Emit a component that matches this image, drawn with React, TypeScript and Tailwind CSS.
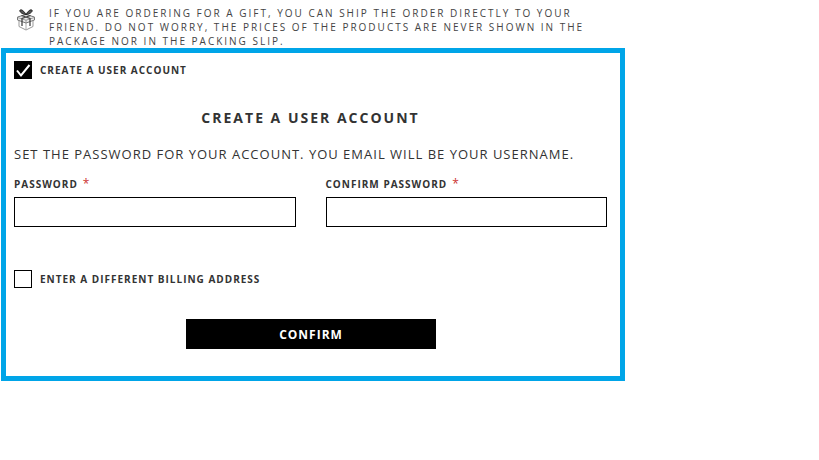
// Checkout step: gift note and create-account box
function GiftIcon() {
  return (
    <svg viewBox="0 0 20 23" className="w-[20px] h-[23px]" fill="none">
      {/* caja */}
      <path d="M3 12V18.5L10 22 17 18.5V12" stroke="#999" strokeWidth="1" fill="#fff" />
      <path d="M10 15V22" stroke="#aaa" strokeWidth="1" />
      {/* tapa */}
      <path d="M1.5 9 10 6.5 18.5 9V12L10 15 1.5 12Z" stroke="#777" strokeWidth="1" fill="#eee" />
      <path d="M1.5 9.5 10 12.2 18.5 9.5M10 12.2V15" stroke="#888" strokeWidth="0.8" />
      {/* cinta */}
      <path d="M5.5 7.5 14 10.5V18M14.5 7.5 6 10.5V18" stroke="#444" strokeWidth="1.3" />
      {/* lazo */}
      <path d="M10 6.5C8 3 5.5 1.2 4.2 2 2.8 3 5.5 6.3 10 6.5ZM10 6.5C12 3 14.5 1.2 15.8 2 17.2 3 14.5 6.3 10 6.5Z" fill="#555" stroke="#222" strokeWidth="1" />
    </svg>
  );
}

function CheckRow({ label, checked }: { label: string; checked?: boolean }) {
  return (
    <label className="flex items-center gap-2 h-[18px]">
      <span className={`w-[18px] h-[18px] border border-black flex items-center justify-center ${checked ? "bg-black" : "bg-white"}`}>
        {checked && (
          <svg viewBox="0 0 18 18" className="w-[18px] h-[18px] shrink-0" fill="none">
            <path d="M3 9.5 7 14.5 15.5 4" stroke="#fff" strokeWidth="2" />
          </svg>
        )}
      </span>
      <span className="text-[10px] leading-[18px] font-bold tracking-[1px] text-[#333]">{label}</span>
    </label>
  );
}

function Field({ label }: { label: string }) {
  return (
    <div className="flex-1">
      <div className="h-[26px] flex items-center text-[10px] font-bold tracking-[1px] text-[#333]">
        {label} <span className="ml-[5px] text-[#c33] text-[12px] font-normal">*</span>
      </div>
      <input className="block w-full h-[30px] border border-black bg-white" />
    </div>
  );
}

export default function App() {
  return (
    <div className="w-[819px] h-[460px] bg-white overflow-hidden font-['Open_Sans',sans-serif]">
      {/* Aviso regalo */}
      <div className="flex h-[48px] pl-[16px] pt-[6px]">
        <div className="pt-[2px]">
          <GiftIcon />
        </div>
        <p className="ml-[13px] w-[545px] text-[10px] leading-[14px] tracking-[2px] text-[#444]">
          IF YOU ARE ORDERING FOR A GIFT, YOU CAN SHIP THE ORDER DIRECTLY TO YOUR FRIEND. DO NOT WORRY, THE PRICES OF THE PRODUCTS ARE NEVER SHOWN IN THE PACKAGE NOR IN THE PACKING SLIP.
        </p>
      </div>

      {/* Caja crear cuenta */}
      <div className="ml-[1px] w-[624px] h-[333px] border-[5px] border-[#00a5e8] px-[8px] pt-[8px]">
        <CheckRow label="CREATE A USER ACCOUNT" checked />
        <h2 className="mt-[29px] w-[593px] text-center text-[14px] leading-[20px] font-bold tracking-[2px] text-[#333]">CREATE A USER ACCOUNT</h2>
        <p className="mt-[16px] text-[13px] leading-[20px] tracking-[1px] text-[#333]">
          SET THE PASSWORD FOR YOUR ACCOUNT. YOU EMAIL WILL BE YOUR USERNAME.
        </p>
        <div className="mt-[7px] flex gap-[30px] w-[593px]">
          <Field label="PASSWORD" />
          <Field label="CONFIRM PASSWORD" />
        </div>
        <div className="mt-[43px]">
          <CheckRow label="ENTER A DIFFERENT BILLING ADDRESS" />
        </div>
        <button className="block mt-[31px] ml-[172px] w-[250px] h-[30px] pt-[1px] bg-black text-white text-[12px] font-bold tracking-[1px]">
          CONFIRM
        </button>
      </div>
    </div>
  );
}
